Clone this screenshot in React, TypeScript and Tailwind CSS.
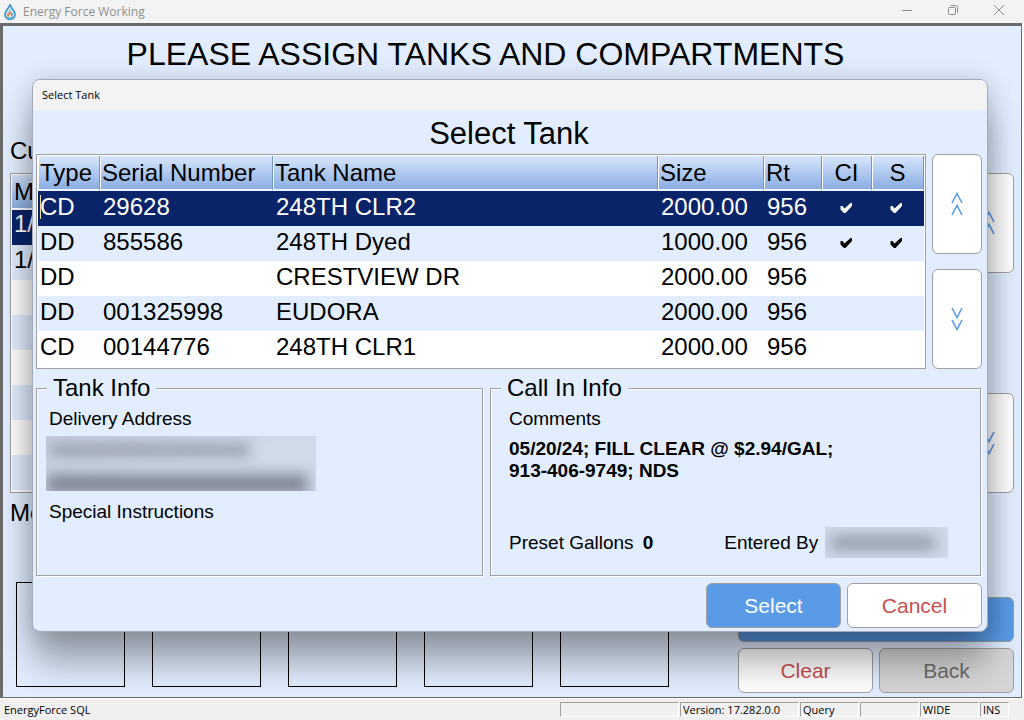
import React from "react";
import clsx from "clsx";

type Tank = {
  type: string;
  serial: string;
  name: string;
  size: string;
  route: string;
  callIn: boolean;
  scheduled: boolean;
};

const tanks: Tank[] = [
  { type: "CD", serial: "29628", name: "248TH CLR2", size: "2000.00", route: "956", callIn: true, scheduled: true },
  { type: "DD", serial: "855586", name: "248TH Dyed", size: "1000.00", route: "956", callIn: true, scheduled: true },
  { type: "DD", serial: "", name: "CRESTVIEW DR", size: "2000.00", route: "956", callIn: false, scheduled: false },
  { type: "DD", serial: "001325998", name: "EUDORA", size: "2000.00", route: "956", callIn: false, scheduled: false },
  { type: "CD", serial: "00144776", name: "248TH CLR1", size: "2000.00", route: "956", callIn: false, scheduled: false },
];

const columns = [
  { label: "Type", className: "w-[62px] pl-[2px] text-left" },
  { label: "Serial Number", className: "w-[173px] pl-[2px] text-left" },
  { label: "Tank Name", className: "pl-[2px] text-left" },
  { label: "Size", className: "w-[106px] pl-[2px] text-left" },
  { label: "Rt", className: "w-[58px] pl-[2px] text-left" },
  { label: "CI", className: "w-[50px] pl-0 text-center" },
  { label: "S", className: "w-[52px] pl-0 text-center" },
];

const statusCells = [
  { text: "", className: "w-[119px]" },
  { text: "Version: 17.282.0.0", className: "w-[119px]" },
  { text: "Query", className: "w-[59px]" },
  { text: "", className: "w-[59px]" },
  { text: "WIDE", className: "w-[59px]" },
  { text: "INS", className: "w-[29px]" },
];

const DropLogo = () => (
  <svg className="h-4 w-3" viewBox="0 0 12 16" fill="none" aria-hidden="true">
    <path d="M6 1C5 4 1 6.500 1 10.500a5 4.800 0 0 0 10 0C11 6.500 7 4 6 1Z" stroke="#2b8fc9" strokeWidth="1.500" />
    <path d="M6 5C5.500 7 3.200 8.500 3.200 11a2.800 2.800 0 0 0 5.600 0C8.800 8.500 6.500 7 6 5Z" stroke="#5fb0dc" strokeWidth="1" />
    <path d="M4.300 12.500V10.500L6 8.500l1.700 2v2" stroke="#e2703a" strokeWidth="1.300" />
  </svg>
);

const Check = () => (
  <svg className="h-3 w-3" viewBox="0 0 12 12" fill="currentColor" aria-label="Yes">
    <path d="M0.500 3H2.500L4.500 5.500 10.500 0H12V3L5.500 10H4L0.500 6.500Z" />
  </svg>
);

const ScrollButton = ({ dir }: { dir: "up" | "down" }) => (
  <button
    type="button"
    aria-label={dir === "up" ? "Scroll up" : "Scroll down"}
    className="flex h-[100px] w-[50px] items-center justify-center rounded-md border border-[#a0a0a0] bg-white"
  >
    <svg
      className={clsx("h-6 w-3", dir === "down" && "rotate-180")}
      viewBox="0 0 12 24"
      fill="none"
      stroke="#5a9be8"
      strokeWidth="1.600"
      aria-hidden="true"
    >
      <path d="M1 11 6 1.500l5 9.500M1 23 6 13.500l5 9.500" />
    </svg>
  </button>
);

const ActionButton = ({ label, className }: { label?: string; className: string }) => (
  <button
    type="button"
    aria-label={label ? undefined : "Assign"}
    className={clsx("h-[45px] rounded-md border border-[#a0a0a0] text-[21px]", className)}
  >
    {label}
  </button>
);

const TitleBar = () => (
  <header className="flex h-[23px] shrink-0 items-center bg-[#f3f3f3] pr-[19px] pl-1">
    <DropLogo />
    <span className="ml-[7px] pt-px font-['Open_Sans',sans-serif] text-[12px] text-[#8f8f8f]">Energy Force Working</span>
    <div className="ml-auto flex items-center gap-[34px] pb-[3px] text-[#8a8a8a]">
      <button type="button" aria-label="Minimize">
        <svg className="h-3 w-3" viewBox="0 0 12 12" stroke="currentColor">
          <path d="M1 6.500h10" />
        </svg>
      </button>
      <button type="button" aria-label="Restore">
        <svg className="h-3 w-3" viewBox="0 0 12 12" stroke="currentColor" fill="none">
          <rect x="1.500" y="3.500" width="7" height="7" rx="1" />
          <path d="M3.500 1.500h5a2 2 0 0 1 2 2v5" />
        </svg>
      </button>
      <button type="button" aria-label="Close">
        <svg className="h-3 w-3" viewBox="0 0 12 12" stroke="currentColor">
          <path d="M1 1l10 10M11 1L1 11" />
        </svg>
      </button>
    </div>
  </header>
);

const AssignPage = () => (
  <main className="mr-[2px] flex flex-1 flex-col border border-t-[3px] border-l-[3px] border-[#6b6b6b] bg-[#e2eeff] px-[7px] pb-1">
    <h1 className="pt-2 pr-[53px] text-center text-[32px] leading-10">PLEASE ASSIGN TANKS AND COMPARTMENTS</h1>
    <h2 className="mt-[61px] text-[24px] leading-8">Cu</h2>
    <div className="mt-[6px] flex gap-[6px]">
      <div className="h-[320px] flex-1 border border-[#a0a0a0] bg-white p-px text-[24px]">
        <div className="h-[34px] border-b border-white bg-linear-to-b from-[#d4e4fa] to-[#8db0e4] pl-[2px] leading-[34px]">M</div>
        <div className="mt-px h-[35px] bg-[#0a246a] pl-[2px] leading-7 text-white">1/</div>
        <div className="h-[35px] bg-[#e2eeff] pl-[2px] leading-[30px]">1/</div>
        {[0, 1, 2].map((n) => (
          <div key={n}>
            <div className="h-[35px] bg-white" />
            <div className="h-[35px] bg-[#e2eeff]" />
          </div>
        ))}
      </div>
      <div className="flex flex-col justify-between">
        <ScrollButton dir="up" />
        <ScrollButton dir="down" />
      </div>
    </div>
    <h2 className="mt-1 text-[24px] leading-8">Me</h2>
    <div className="mt-auto flex items-end justify-between">
      <div className="mb-[6px] ml-[6px] flex gap-[27px]">
        {[0, 1, 2, 3, 4].map((n) => (
          <div key={n} className="h-[105px] w-[109px] border border-black" />
        ))}
      </div>
      <div className="grid w-[276px] grid-cols-2 gap-[6px]">
        <ActionButton className="col-span-2 bg-[#5a9be8]" />
        <ActionButton label="Clear" className="bg-white text-[#c8504f]" />
        <ActionButton label="Back" className="bg-[#d6d6d6] text-[#6d6d6d]" />
      </div>
    </div>
  </main>
);

const TankTable = () => (
  <div className="flex-1 border border-[#a0a0a0] bg-white p-px pb-[2px]">
    <table className="w-full table-fixed border-separate border-spacing-0 text-[24px]">
      <thead>
        <tr className="h-[35px]">
          {columns.map((col) => (
            <th
              key={col.label}
              className={clsx(
                "border-r border-b-2 border-r-[#6f94d2] border-b-[#eef5ff] bg-linear-to-b from-[#d8e6fb] to-[#8aade2] py-0 pr-0 leading-8 font-normal shadow-[inset_1px_0_0_#fff]",
                col.className
              )}
            >
              {col.label}
            </th>
          ))}
        </tr>
      </thead>
      <tbody>
        {tanks.map((tank, index) => (
          <tr
            key={index}
            className={clsx(
              "h-[35px]",
              index === 0 ? "bg-[#0a246a] text-white" : index % 2 ? "bg-[#e2eeff]" : "bg-white"
            )}
          >
            <td className="p-0 pb-[3px] pl-[2px] leading-8">
              <span className={clsx("block h-6 leading-6", index === 0 && "shadow-[inset_1px_0_0_#f5db95]")}>
                {tank.type}
              </span>
            </td>
            <td className="p-0 pb-[3px] pl-[3px] leading-8">{tank.serial}</td>
            <td className="p-0 pb-[3px] pl-[3px] leading-8">{tank.name}</td>
            <td className="p-0 pb-[3px] pl-[3px] leading-8">{tank.size}</td>
            <td className="p-0 pb-[3px] pl-[3px] leading-8">{tank.route}</td>
            <td className="p-0 pl-[18px]">{tank.callIn && <Check />}</td>
            <td className="p-0 pl-[18px]">{tank.scheduled && <Check />}</td>
          </tr>
        ))}
      </tbody>
    </table>
  </div>
);

const InfoGroup = ({ title, children }: { title: string; children: React.ReactNode }) => (
  <fieldset className="h-[203px] min-w-0 border border-[#a0a0a0] px-3 shadow-[1px_1px_0_#fff,inset_1px_1px_0_#fff]">
    <legend className="-ml-[2px] bg-[#e2eeff] px-[6px] text-[24px] leading-[30px]">{title}</legend>
    <div className="pt-[5px]">{children}</div>
  </fieldset>
);

const SelectTankDialog = () => (
  <section
    role="dialog"
    aria-labelledby="dialog-title"
    className="absolute top-[79px] right-9 left-8 overflow-hidden rounded-lg border border-[#a3abb8] bg-[#e2eeff] shadow-[0_30px_36px_rgba(0,0,0,0.34),0_0_24px_rgba(0,0,0,0.16)]"
  >
    <div className="h-[30px] bg-[#f3f3f3] pl-[9px] font-['Open_Sans',sans-serif] text-[11px] leading-[30px]">Select Tank</div>
    <div className="px-[3px] pr-[5px] pb-[3px]">
      <h2 id="dialog-title" className="pt-1 text-center text-[31px] leading-10">
        Select Tank
      </h2>
      <div className="flex gap-[6px]">
        <TankTable />
        <div className="flex flex-col justify-between">
          <ScrollButton dir="up" />
          <ScrollButton dir="down" />
        </div>
      </div>
      <div className="mt-1 mr-px grid grid-cols-[447fr_491fr] gap-[7px] text-[19px] leading-[22px]">
        <InfoGroup title="Tank Info">
          <p>Delivery Address</p>
          <div className="mt-[6px] -ml-[3px] h-[55px] w-[270px] overflow-hidden bg-linear-to-br from-[#c6cfdc] via-[#d0dae9] to-[#d0dae9]">
            <div className="mt-2 ml-1 h-3 w-[200px] bg-[#939ba8] blur-[7px]" />
            <div className="mt-[18px] h-[20px] w-[262px] bg-[#7f8793] blur-[7px]" />
          </div>
          <p className="mt-[10px]">Special Instructions</p>
        </InfoGroup>
        <InfoGroup title="Call In Info">
          <div className="ml-[6px]">
            <p>Comments</p>
            <p className="mt-2 font-bold">
              05/20/24; FILL CLEAR @ $2.94/GAL;
              <br />
              913-406-9749; NDS
            </p>
            <div className="mt-[45px] flex items-center">
              <span>Preset Gallons</span>
              <b className="ml-[9px]">0</b>
              <span className="ml-[71px]">Entered By</span>
              <div className="ml-[7px] h-[31px] w-[123px] overflow-hidden bg-[#ced9e9] pt-[9px] pl-[6px]">
                <div className="h-[14px] w-[104px] bg-[#929aa6] blur-[7px]" />
              </div>
            </div>
          </div>
        </InfoGroup>
      </div>
      <div className="mt-[7px] flex justify-end gap-[6px]">
        <ActionButton label="Select" className="w-[135px] bg-[#5a9be8] text-white" />
        <ActionButton label="Cancel" className="w-[135px] bg-white text-[#c8504f]" />
      </div>
    </div>
  </section>
);

const StatusBar = () => (
  <footer className="flex h-[22px] shrink-0 items-center border-t border-white bg-[#f0f0f0] pr-[15px] pl-1 font-['Open_Sans',sans-serif] text-[11px]">
    <span className="mr-auto pt-px">EnergyForce SQL</span>
    <div className="flex gap-px">
      {statusCells.map((cell, index) => (
        <span
          key={index}
          className={clsx(
            "h-[15px] border border-t-[#a0a0a0] border-r-white border-b-white border-l-[#a0a0a0] pl-[2px] leading-[14px] whitespace-nowrap",
            cell.className
          )}
        >
          {cell.text}
        </span>
      ))}
    </div>
  </footer>
);

const App = () => {
  return (
    <div className="relative flex min-h-screen flex-col bg-white font-['Liberation_Sans',Arial,sans-serif] text-black">
      <TitleBar />
      <AssignPage />
      <StatusBar />
      <SelectTankDialog />
    </div>
  );
};

export default App;
